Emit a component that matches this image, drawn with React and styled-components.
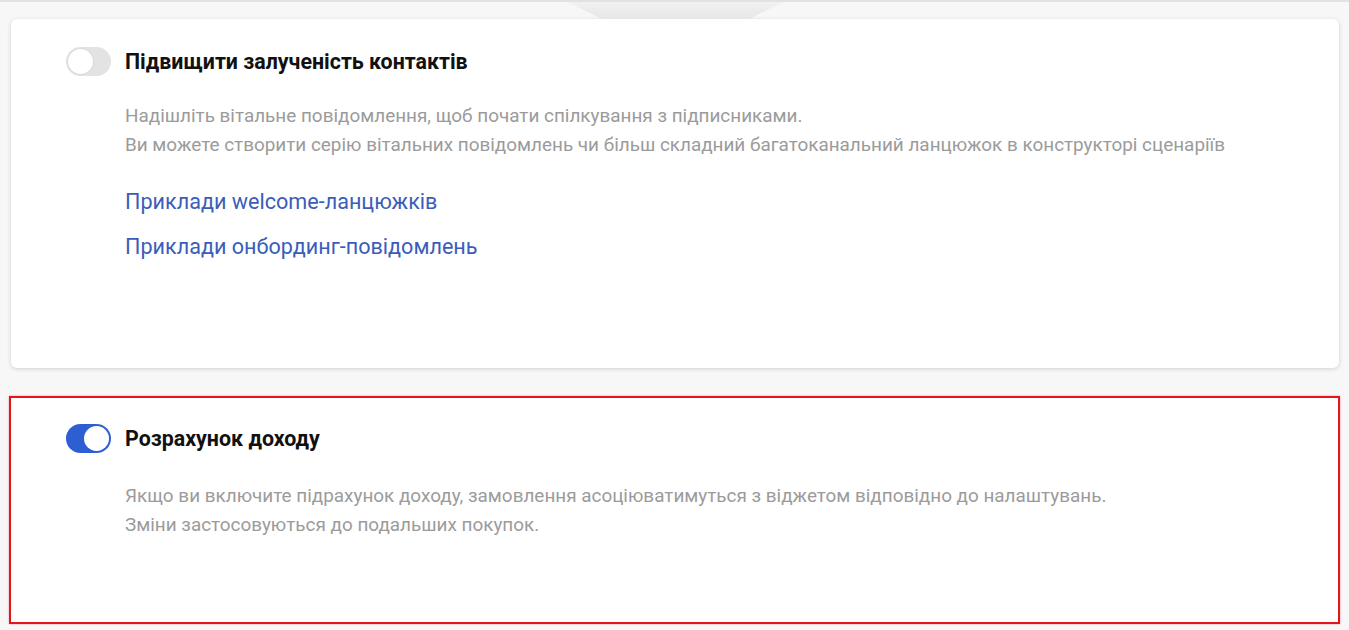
import React from "react";
import styled, { createGlobalStyle } from "styled-components";

const GlobalStyle = createGlobalStyle`
  html, body {
    margin: 0;
    padding: 0;
    background: #f7f7f7;
    font-family: Roboto, "Noto Sans", "Liberation Sans", sans-serif;
  }
`;

const Page = styled.div`
  width: 1349px;
  height: 630px;
  overflow: hidden;
  background: #f7f7f7;
  border-top: 2px solid #e2e2e2;
  box-sizing: border-box;
`;

const TopStrip = styled.div`
  height: 17px;
  display: flex;
  justify-content: center;
`;

const Handle = styled.div`
  width: 216px;
  height: 17px;
  margin-left: 2px;
  background: linear-gradient(#f1f1f1, #e6e6e6);
  clip-path: polygon(0 0, 100% 0, 84% 100%, 16% 100%);
`;

const Stack = styled.div`
  display: flex;
  flex-direction: column;
  gap: 28px;
`;

const Card = styled.section`
  margin: 0 ${(p) => (p.$highlight ? "9px" : "10px 0 11px")};
  height: ${(p) => p.$height}px;
  background: #fff;
  box-sizing: border-box;
  border-radius: ${(p) => (p.$highlight ? "0" : "6px")};
  border: ${(p) => (p.$highlight ? "2px solid #e2141c" : "none")};
  box-shadow: ${(p) =>
    p.$highlight ? "0 0 2px rgba(226, 20, 28, 0.4)" : "0 1px 4px rgba(0, 0, 0, 0.16)"};
  padding: ${(p) => (p.$highlight ? "26px 0 0 55px" : "28px 0 0 55px")};
`;

const HeaderRow = styled.div`
  display: flex;
  align-items: center;
  gap: 14px;
`;

const Switch = styled.span`
  position: relative;
  width: 45px;
  height: 29px;
  border-radius: 15px;
  box-sizing: border-box;
  background: ${(p) => (p.$on ? "#2d5fd2" : "#e3e3e3")};
  flex-shrink: 0;
`;

const Knob = styled.span`
  position: absolute;
  top: 2px;
  left: ${(p) => (p.$on ? "18px" : "2px")};
  width: 25px;
  height: 25px;
  border-radius: 50%;
  background: #fff;
  box-shadow: ${(p) => (p.$on ? "none" : "0 0 2px rgba(0, 0, 0, 0.12)")};
`;

const Title = styled.h2`
  margin: 0;
  font-size: 21.4px;
  font-weight: 700;
  color: #111;
`;

const Body = styled.div`
  padding-left: 59px;
  margin-top: ${(p) => p.$top}px;
`;

const Description = styled.p`
  margin: 0;
  font-size: 18.9px;
  line-height: 29px;
  color: #9b9b9b;
`;

const Links = styled.div`
  display: flex;
  flex-direction: column;
  gap: 15px;
  margin-top: 28px;
`;

const Link = styled.a`
  font-size: 21.6px;
  line-height: 30px;
  color: #3b5db9;
  text-decoration: none;
  cursor: pointer;
`;

function Toggle({ on }) {
  return (
    <Switch $on={on}>
      <Knob $on={on} />
    </Switch>
  );
}

export default function App() {
  return (
    <>
      <GlobalStyle />
      <Page>
        <TopStrip>
          <Handle />
        </TopStrip>
        <Stack>
          <Card $height={349}>
            <HeaderRow>
              <Toggle on={false} />
              <Title>Підвищити залученість контактів</Title>
            </HeaderRow>
            <Body $top={25}>
              <Description>
                Надішліть вітальне повідомлення, щоб почати спілкування з підписниками.
                <br />
                Ви можете створити серію вітальних повідомлень чи більш складний
                багатоканальний ланцюжок в конструкторі сценаріїв
              </Description>
              <Links>
                <Link>Приклади welcome-ланцюжків</Link>
                <Link>Приклади онбординг-повідомлень</Link>
              </Links>
            </Body>
          </Card>
          <Card $highlight $height={228}>
            <HeaderRow>
              <Toggle on />
              <Title>Розрахунок доходу</Title>
            </HeaderRow>
            <Body $top={28}>
              <Description>
                Якщо ви включите підрахунок доходу, замовлення асоціюватимуться з
                віджетом відповідно до налаштувань.
                <br />
                Зміни застосовуються до подальших покупок.
              </Description>
            </Body>
          </Card>
        </Stack>
      </Page>
    </>
  );
}
